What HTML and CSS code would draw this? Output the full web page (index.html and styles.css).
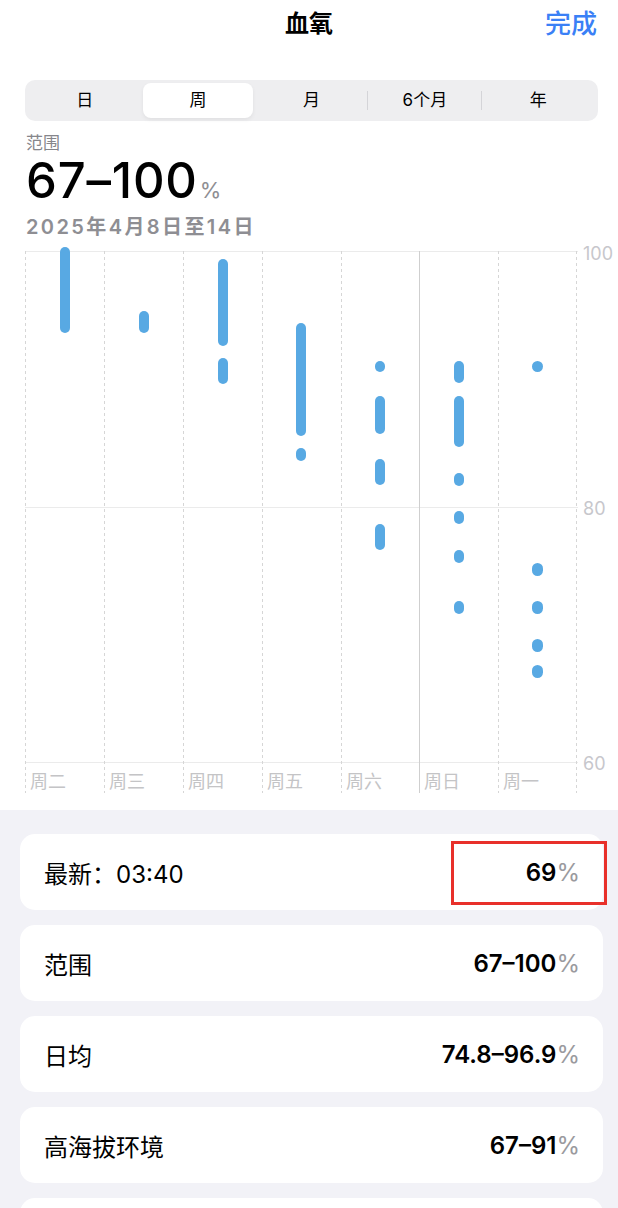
FILE: index.html
```html
<!DOCTYPE html>
<html lang="zh-CN">
    <head>
        <meta charset="UTF-8" />
        <meta name="viewport" content="width=device-width, initial-scale=1.0" />
        <title>血氧</title>
        <link rel="stylesheet" href="styles.css">
    </head>
    <body>
        <header class="nav-bar">
            <h1 class="nav-title">血氧</h1>
            <button class="nav-done">完成</button>
        </header>

        <div class="segmented">
            <div class="segment">日</div>
            <div class="segment active">周</div>
            <div class="segment">月</div>
            <div class="segment sep">6个月</div>
            <div class="segment sep">年</div>
        </div>

        <div class="summary">
            <div class="summary-label">范围</div>
            <div class="summary-value">67–100<span class="unit">%</span></div>
            <div class="summary-date">2025年4月8日至14日</div>
        </div>

        <!-- 每日血氧范围 -->
        <svg class="chart" width="618" height="566" viewBox="0 0 618 566">
            <g class="grid-h">
                <line x1="25" y1="11.5" x2="578" y2="11.5" />
                <line x1="25" y1="267.5" x2="578" y2="267.5" />
                <line x1="25" y1="522.5" x2="578" y2="522.5" />
            </g>
            <g class="grid-v">
                <line x1="25.5" y1="11" x2="25.5" y2="553" />
                <line x1="104.5" y1="11" x2="104.5" y2="553" />
                <line x1="183.5" y1="11" x2="183.5" y2="553" />
                <line x1="262.5" y1="11" x2="262.5" y2="553" />
                <line x1="341.5" y1="11" x2="341.5" y2="553" />
                <line x1="498.5" y1="11" x2="498.5" y2="553" />
                <line x1="576.5" y1="11" x2="576.5" y2="553" />
            </g>
            <line class="grid-week" x1="419.5" y1="11" x2="419.5" y2="553" />

            <g class="axis-y">
                <text x="583" y="20">100</text>
                <text x="583" y="275">80</text>
                <text x="583" y="530">60</text>
            </g>
            <g class="axis-x">
                <text x="30" y="548">周二</text>
                <text x="109" y="548">周三</text>
                <text x="188" y="548">周四</text>
                <text x="267" y="548">周五</text>
                <text x="346" y="548">周六</text>
                <text x="424" y="548">周日</text>
                <text x="503" y="548">周一</text>
            </g>

            <g class="bars">
                <rect x="60" y="7" width="10" height="86" rx="5" />

                <rect x="139" y="71" width="10" height="22" rx="5" />

                <rect x="218" y="19" width="10" height="87" rx="5" />
                <rect x="218" y="118" width="10" height="26" rx="5" />

                <rect x="296" y="83" width="10" height="113" rx="5" />
                <rect x="296" y="208" width="10" height="13" rx="5" />

                <rect x="375" y="121" width="10" height="11" rx="5" />
                <rect x="375" y="156" width="10" height="38" rx="5" />
                <rect x="375" y="219" width="10" height="26" rx="5" />
                <rect x="375" y="284" width="10" height="26" rx="5" />

                <rect x="454" y="121" width="10" height="22" rx="5" />
                <rect x="454" y="156" width="10" height="51" rx="5" />
                <rect x="454" y="233" width="10" height="13" rx="5" />
                <rect x="454" y="271" width="10" height="13" rx="5" />
                <rect x="454" y="310" width="10" height="13" rx="5" />
                <rect x="454" y="361" width="10" height="13" rx="5" />

                <rect x="532" y="121" width="11" height="11" rx="5.5" />
                <rect x="532" y="323" width="11" height="13" rx="5.5" />
                <rect x="532" y="361" width="11" height="13" rx="5.5" />
                <rect x="532" y="399" width="11" height="13" rx="5.5" />
                <rect x="532" y="425" width="11" height="13" rx="5.5" />
            </g>
        </svg>

        <section class="stats">
            <div class="stat-card">
                <span class="stat-name">最新：03:40</span>
                <span class="stat-value">69<span class="unit">%</span></span>
                <div class="highlight"></div>
            </div>
            <div class="stat-card">
                <span class="stat-name">范围</span>
                <span class="stat-value">67–100<span class="unit">%</span></span>
            </div>
            <div class="stat-card">
                <span class="stat-name">日均</span>
                <span class="stat-value">74.8–96.9<span class="unit">%</span></span>
            </div>
            <div class="stat-card">
                <span class="stat-name">高海拔环境</span>
                <span class="stat-value">67–91<span class="unit">%</span></span>
            </div>
            <div class="stat-card"></div>
        </section>
    </body>
</html>
```

FILE: styles.css
```css
body {
    margin: 0;
    background-color: #fff;
    font-family: Inter, "Noto Sans CJK SC", sans-serif;
    color: #000;
    overflow: hidden;
}

.nav-bar {
    position: relative;
    height: 44px;
    text-align: center;
}

.nav-title {
    margin: 0;
    font-family: "Noto Sans CJK SC", sans-serif;
    font-size: 24px;
    font-weight: 700;
    line-height: 44px;
}

.nav-done {
    position: absolute;
    top: 0;
    right: 21px;
    padding: 0;
    border: none;
    background: none;
    font-family: "Noto Sans CJK SC", sans-serif;
    font-size: 26px;
    font-weight: 500;
    line-height: 44px;
    color: #3a80f6;
}

.segmented {
    display: grid;
    grid-template-columns: repeat(5, 1fr);
    height: 41px;
    margin: 36px 20px 0 25px;
    padding: 3px;
    box-sizing: border-box;
    border-radius: 10px;
    background-color: #eeeef0;
}

.segment {
    position: relative;
    display: flex;
    align-items: center;
    justify-content: center;
    margin: 0 2px;
    border-radius: 8px;
    font-size: 17px;
    line-height: 1;
}

.segment.active {
    background-color: #fff;
    box-shadow: 0 2px 4px rgba(0, 0, 0, 0.06);
}

.segment.sep::before {
    content: '';
    position: absolute;
    left: -3px;
    top: 8px;
    bottom: 8px;
    border-left: 1px solid #d4d4d8;
}

.summary {
    padding-left: 26px;
}

.summary-label {
    margin-top: 12px;
    font-size: 17px;
    line-height: 20px;
    color: #86868b;
}

.summary-value {
    margin-top: 2px;
    font-size: 49px;
    font-weight: 500;
    line-height: 52px;
    letter-spacing: 0.8px;
}

.summary-value .unit {
    margin-left: 2px;
    font-size: 22px;
    font-weight: 400;
    color: #8e8e93;
    letter-spacing: 0;
}

.summary-date {
    margin-top: 0;
    font-size: 20px;
    font-weight: 600;
    line-height: 22px;
    color: #8e8e93;
    letter-spacing: 2.4px;
}

.chart {
    display: block;
    margin-top: 2px;
}

.grid-h line {
    stroke: #ebebeb;
    stroke-width: 1;
}

.grid-v line {
    stroke: #d6d6d6;
    stroke-width: 1;
    stroke-dasharray: 3 3;
}

.grid-week {
    stroke: #cfcfcf;
    stroke-width: 1;
}

.axis-y text {
    font-family: Inter, sans-serif;
    font-size: 18px;
    fill: #c7c7cc;
}

.axis-x text {
    font-family: "Noto Sans CJK SC", sans-serif;
    font-size: 18px;
    fill: #c4c4c6;
}

.bars rect {
    fill: #58a9e3;
}

.stats {
    display: flex;
    flex-direction: column;
    gap: 15px;
    height: 398px;
    margin-top: 4px;
    padding: 24px 15px 0 20px;
    box-sizing: border-box;
    overflow: hidden;
    background-color: #f2f2f7;
}

.stat-card {
    position: relative;
    display: flex;
    align-items: center;
    justify-content: space-between;
    height: 76px;
    padding: 0 23px 0 24px;
    border-radius: 15px;
    background-color: #fff;
    font-size: 24px;
    flex-shrink: 0;
}

.stat-value {
    font-weight: 600;
}

.stat-value .unit {
    font-weight: 400;
    color: #9a9a9e;
}

.highlight {
    position: absolute;
    top: 7px;
    right: -4px;
    width: 156px;
    height: 64px;
    box-sizing: border-box;
    border: 3px solid #e8302a;
}
```
